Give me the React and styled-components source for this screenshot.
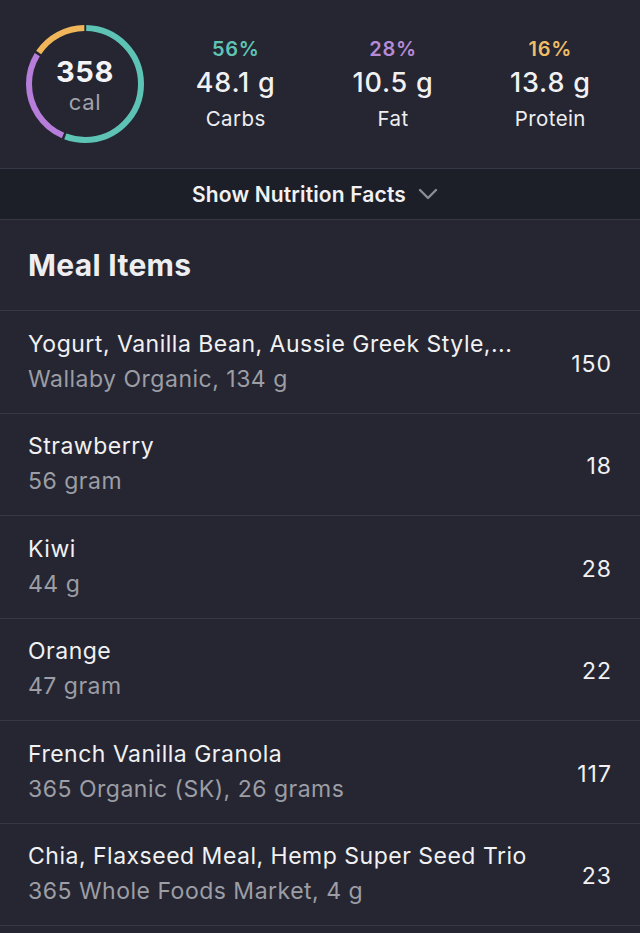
import React from 'react';
import styled, { createGlobalStyle } from 'styled-components';

const GlobalStyle = createGlobalStyle`
  html, body {
    margin: 0;
    padding: 0;
    background: #252631;
  }
  body {
    font-family: Inter, "Noto Sans", "Liberation Sans", sans-serif;
    color: #f1f1f3;
    -webkit-font-smoothing: antialiased;
  }
`;

const macros = [
  { pct: '56%', value: '48.1 g', label: 'Carbs', color: '#5ec4b6' },
  { pct: '28%', value: '10.5 g', label: 'Fat', color: '#b78ad8' },
  { pct: '16%', value: '13.8 g', label: 'Protein', color: '#efbd68' },
];

const items = [
  { name: 'Yogurt, Vanilla Bean, Aussie Greek Style,...', detail: 'Wallaby Organic, 134 g', cal: 150 },
  { name: 'Strawberry', detail: '56 gram', cal: 18 },
  { name: 'Kiwi', detail: '44 g', cal: 28 },
  { name: 'Orange', detail: '47 gram', cal: 22 },
  { name: 'French Vanilla Granola', detail: '365 Organic (SK), 26 grams', cal: 117 },
  { name: 'Chia, Flaxseed Meal, Hemp Super Seed Trio', detail: '365 Whole Foods Market, 4 g', cal: 23 },
];

const ringSegments = [
  { share: 0.56, color: '#5cc3b5' },
  { share: 0.28, color: '#b67ddb' },
  { share: 0.16, color: '#f1b65a' },
];

const CalorieRing = () => {
  const r = 56;
  const circ = 2 * Math.PI * r;
  const gap = 2.5;
  let offset = 0;
  return (
    <RingWrap>
      <svg width="124" height="124" viewBox="0 0 124 124">
        <g transform="rotate(-90 62 62)">
          {ringSegments.map((s) => {
            const len = s.share * circ;
            const el = (
              <circle
                key={s.color}
                cx="62"
                cy="62"
                r={r}
                fill="none"
                stroke={s.color}
                strokeWidth="6"
                strokeDasharray={`${len - gap} ${circ}`}
                strokeDashoffset={-(offset + gap / 2)}
              />
            );
            offset += len;
            return el;
          })}
        </g>
      </svg>
      <RingText>
        <Cal>358</Cal>
        <CalUnit>cal</CalUnit>
      </RingText>
    </RingWrap>
  );
};

const App = () => (
  <>
    <GlobalStyle />
    <Summary>
      <RingCell>
        <CalorieRing />
      </RingCell>
      <Macros>
        {macros.map((m) => (
          <Macro key={m.label}>
            <Pct color={m.color}>{m.pct}</Pct>
            <MacroValue>{m.value}</MacroValue>
            <MacroLabel>{m.label}</MacroLabel>
          </Macro>
        ))}
      </Macros>
    </Summary>
    <FactsBar>
      <span>Show Nutrition Facts</span>
      <svg width="20" height="12" viewBox="0 0 20 12">
        <path d="M2 2 L10 10 L18 2" fill="none" stroke="#8a8c96" strokeWidth="2.4" strokeLinecap="round" strokeLinejoin="round" />
      </svg>
    </FactsBar>
    <SectionHeader>Meal Items</SectionHeader>
    <List>
      {items.map((it) => (
        <Row key={it.name}>
          <RowText>
            <ItemName>{it.name}</ItemName>
            <ItemDetail>{it.detail}</ItemDetail>
          </RowText>
          <ItemCal>{it.cal}</ItemCal>
        </Row>
      ))}
    </List>
  </>
);

export default App;

const Summary = styled.div`
  display: flex;
  align-items: center;
  height: 168px;
  padding: 0 11px 0 0;
  box-sizing: border-box;
  background: #252631;
`;

const RingCell = styled.div`
  width: 157px;
  display: flex;
  justify-content: center;
  padding-left: 13px;
  box-sizing: border-box;
`;

const RingWrap = styled.div`
  position: relative;
  width: 124px;
  height: 124px;
`;

const RingText = styled.div`
  position: absolute;
  inset: 0;
  display: flex;
  flex-direction: column;
  align-items: center;
  justify-content: center;
  padding-top: 3px;
`;

const Cal = styled.div`
  font-size: 29px;
  font-weight: 700;
  letter-spacing: 0.6px;
  line-height: 32px;
  color: #f4f4f6;
`;

const CalUnit = styled.div`
  font-size: 22px;
  letter-spacing: 0.6px;
  line-height: 28px;
  color: #a2a3ab;
`;

const Macros = styled.div`
  flex: 1;
  display: grid;
  grid-template-columns: repeat(3, 1fr);
`;

const Macro = styled.div`
  display: flex;
  flex-direction: column;
  align-items: center;
  margin-top: 1px;
`;

const Pct = styled.div`
  font-size: 20px;
  font-weight: 600;
  letter-spacing: 0.7px;
  line-height: 24px;
  color: ${(p) => p.color};
`;

const MacroValue = styled.div`
  font-size: 27px;
  font-weight: 500;
  letter-spacing: 0.8px;
  line-height: 34px;
  margin-top: 5px;
  color: #f1f1f3;
`;

const MacroLabel = styled.div`
  font-size: 20.5px;
  letter-spacing: 0.4px;
  line-height: 26px;
  margin-top: 6px;
  color: #eeeef1;
`;

const FactsBar = styled.div`
  display: flex;
  align-items: center;
  justify-content: center;
  gap: 12px;
  height: 50px;
  padding-right: 10px;
  background: #1d1f28;
  border-top: 1px solid #363845;
  border-bottom: 1px solid #363845;
  font-size: 21px;
  font-weight: 600;
  letter-spacing: 0.15px;
  color: #f1f1f3;
`;

const SectionHeader = styled.div`
  height: 90px;
  display: flex;
  align-items: center;
  padding: 0 28px;
  font-size: 30px;
  font-weight: 700;
  letter-spacing: 0.3px;
  color: #eeeef1;
  border-bottom: 1px solid #363845;
`;

const List = styled.div`
  display: flex;
  flex-direction: column;
`;

const Row = styled.div`
  display: flex;
  align-items: center;
  justify-content: space-between;
  height: 101.5px;
  padding: 0 28px;
  border-bottom: 1px solid #363845;
`;

const RowText = styled.div`
  display: flex;
  flex-direction: column;
  gap: 5px;
  margin-top: -1px;
`;

const ItemName = styled.div`
  font-size: 23px;
  letter-spacing: 0.5px;
  line-height: 30px;
  color: #f1f1f3;
`;

const ItemDetail = styled.div`
  font-size: 23px;
  letter-spacing: 0.5px;
  line-height: 30px;
  color: #9c9da5;
`;

const ItemCal = styled.div`
  font-size: 23px;
  letter-spacing: 1px;
  margin-top: 4px;
  color: #f1f1f3;
`;
